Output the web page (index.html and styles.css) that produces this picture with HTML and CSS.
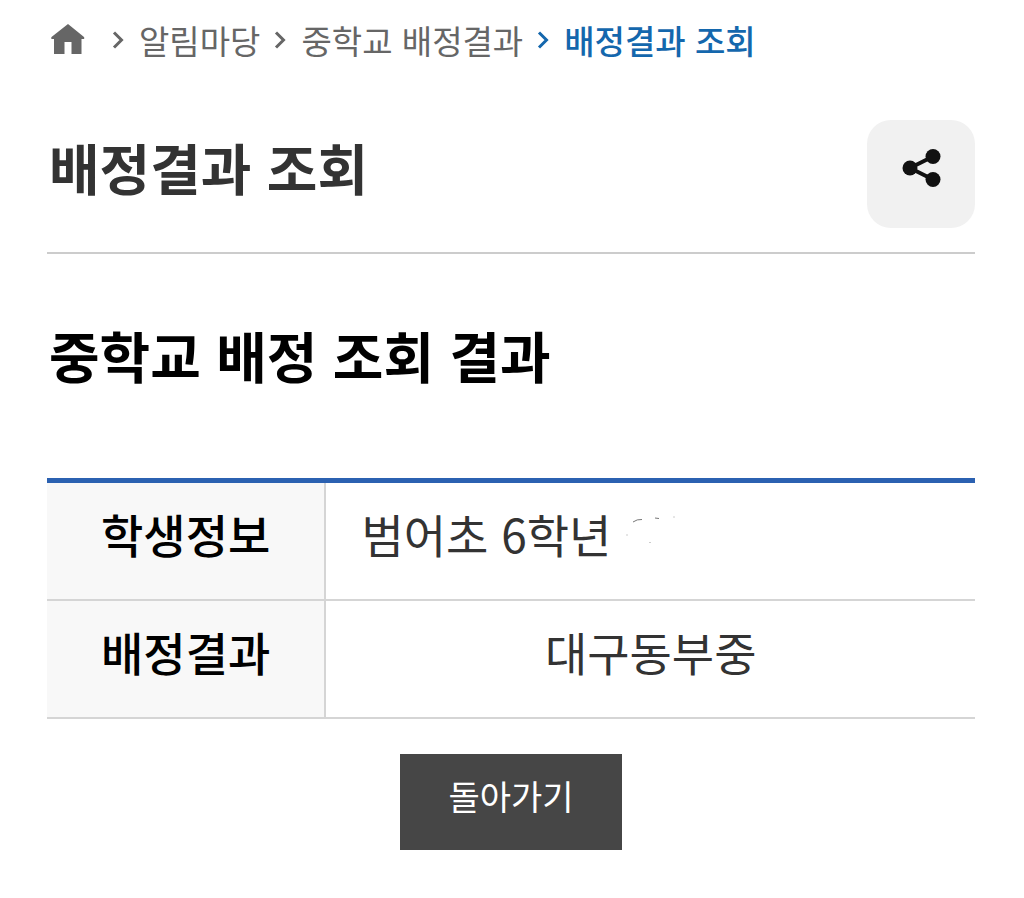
FILE: index.html
```
<!DOCTYPE html>
<html lang="ko">
<head>
<meta charset="utf-8">
<meta name="viewport" content="width=device-width, initial-scale=1">
<title>배정결과 조회</title>
<link rel="stylesheet" href="styles.css">
</head>
<body>
<main class="page">
  <nav class="crumbs" aria-label="현재 위치">
    <a class="crumb-home" href="#" aria-label="홈">
      <svg class="home-icon" viewBox="0 0 36 32" aria-hidden="true"><path d="M18 0 L34 13 Q35 15 33 15 H31.500 V30 H21.500 V18 H14.500 V30 H4 V15 H2.500 Q0.500 15 1.500 13 Z"/></svg>
    </a>
    <svg class="chevron chevron-first" viewBox="0 0 12 20" aria-hidden="true"><path d="M2 2.500 L9.500 10 L2 17.500"/></svg>
    <a class="crumb" href="#">알림마당</a>
    <svg class="chevron" viewBox="0 0 12 20" aria-hidden="true"><path d="M2 2.500 L9.500 10 L2 17.500"/></svg>
    <a class="crumb" href="#">중학교 배정결과</a>
    <svg class="chevron chevron-current" viewBox="0 0 12 20" aria-hidden="true"><path d="M2 2.500 L9.500 10 L2 17.500"/></svg>
    <a class="crumb crumb-current" href="#" aria-current="page">배정결과 조회</a>
  </nav>
  <header class="title-bar">
    <h1 class="title">배정결과 조회</h1>
    <button class="share" type="button" aria-label="공유">
      <svg class="share-icon" viewBox="0 0 40 40" aria-hidden="true">
        <path d="M31 8.500 L8 20 L31 31.500"/>
        <circle cx="31" cy="8.500" r="7.500"/><circle cx="8" cy="20" r="7.500"/><circle cx="31" cy="31.500" r="7.500"/>
      </svg>
    </button>
  </header>
  <h2 class="subtitle">중학교 배정 조회 결과</h2>
  <table class="result">
    <tbody>
      <tr>
        <th scope="row">학생정보</th>
        <td>범어초 6학년<svg class="marks" viewBox="0 0 60 40" aria-hidden="true"><path d="M14 9 Q18 6 23 6.500 M36 5 L40 5.500"/><path class="faint" d="M30 29.500 H32 M54 4 H56 M8 21 V23"/></svg></td>
      </tr>
      <tr>
        <th scope="row">배정결과</th>
        <td class="school">대구동부중</td>
      </tr>
    </tbody>
  </table>
  <div class="actions">
    <button class="back" type="button">돌아가기</button>
  </div>
</main>
</body>
</html>
```
FILE: styles.css
```
* { box-sizing: border-box; }
body {
  margin: 0;
  background: #fff;
  color: #333;
  font-family: "Noto Sans CJK KR", "Noto Sans", sans-serif;
}
.page { padding: 16px 49px 48px 47px; }
.crumbs {
  display: flex;
  align-items: center;
  height: 48px;
  padding-left: 3px;
  font-size: 33px;
  line-height: 48px;
}
.crumb-home { display: flex; margin-right: 26px; }
.home-icon { width: 36px; height: 32px; fill: #666; }
.chevron {
  width: 12px;
  height: 20px;
  margin: 0 15px 0 14px;
  fill: none;
  stroke: #666;
  stroke-width: 3;
}
.chevron-first { margin-left: 0; }
.chevron-current { stroke: #1467ad; }
.crumb { color: #666; font-weight: 400; text-decoration: none; }
.crumb-current { color: #1467ad; font-weight: 500; }
.title-bar {
  display: flex;
  align-items: flex-start;
  justify-content: space-between;
  margin-top: 56px;
  padding-bottom: 24px;
  border-bottom: 2px solid #ccc;
}
.title {
  margin: 6px 0 0 2px;
  font-size: 55px;
  line-height: 80px;
  font-weight: 700;
}
.share {
  display: flex;
  justify-content: center;
  width: 108px;
  height: 108px;
  padding: 28px 0 0 2px;
  border: 0;
  border-radius: 24px;
  background: #f1f1f1;
}
.share-icon { width: 40px; height: 40px; fill: #111; }
.share-icon path { fill: none; stroke: #111; stroke-width: 4; }
.subtitle {
  margin: 60px 0 84px 2px;
  color: #000;
  font-size: 55px;
  line-height: 80px;
  font-weight: 700;
}
.result {
  width: 100%;
  border-collapse: collapse;
  border-top: 5px solid #2b61b1;
  table-layout: fixed;
  font-size: 46px;
  line-height: 68px;
}
.result th, .result td {
  padding: 16px 0 32px;
  border-bottom: 2px solid #d5d5d5;
}
.result th {
  width: 30%;
  border-right: 2px solid #d5d5d5;
  background: #f8f8f8;
  color: #000;
  font-weight: 500;
}
.result td { padding-left: 35px; font-weight: 400; }
.result .school { padding-left: 0; text-align: center; }
.marks { width: 60px; height: 40px; margin-left: 8px; fill: none; stroke: #777; stroke-width: 1; }
.faint { stroke: #ccc; }
.actions { display: flex; justify-content: center; margin-top: 35px; }
.back {
  padding: 16px 48px 28px;
  border: 0;
  background: #464646;
  color: #fff;
  font-family: inherit;
  font-size: 34px;
  line-height: 52px;
  font-weight: 400;
}
```
